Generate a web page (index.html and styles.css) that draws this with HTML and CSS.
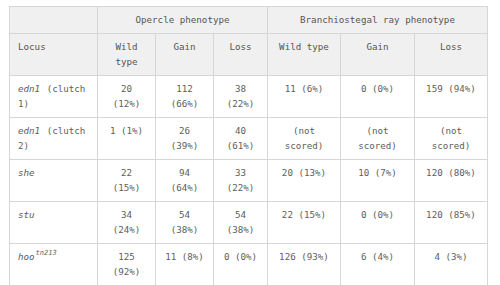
FILE: index.html
```html
<!DOCTYPE html>
<html>
<head>
<meta charset="utf-8">
<link rel="stylesheet" href="styles.css">
</head>
<body>
<table class="pheno">
  <colgroup>
    <col class="c-locus">
    <col class="c-o1"><col class="c-o2"><col class="c-o3">
    <col class="c-b1"><col class="c-b2"><col class="c-b3">
  </colgroup>
  <thead>
    <tr class="h1">
      <th></th>
      <th colspan="3">Opercle phenotype</th>
      <th colspan="3">Branchiostegal ray phenotype</th>
    </tr>
    <tr class="h2">
      <th class="left">Locus</th>
      <th>Wild type</th>
      <th>Gain</th>
      <th>Loss</th>
      <th>Wild type</th>
      <th>Gain</th>
      <th>Loss</th>
    </tr>
  </thead>
  <tbody>
    <tr>
      <td class="left"><i>edn1</i> (clutch 1)</td>
      <td>20 (12%)</td><td>112 (66%)</td><td>38 (22%)</td>
      <td>11 (6%)</td><td>0 (0%)</td><td>159 (94%)</td>
    </tr>
    <tr>
      <td class="left"><i>edn1</i> (clutch 2)</td>
      <td>1 (1%)</td><td>26 (39%)</td><td>40 (61%)</td>
      <td>(not scored)</td><td>(not scored)</td><td>(not scored)</td>
    </tr>
    <tr>
      <td class="left"><i>she</i></td>
      <td>22 (15%)</td><td>94 (64%)</td><td>33 (22%)</td>
      <td>20 (13%)</td><td>10 (7%)</td><td>120 (80%)</td>
    </tr>
    <tr>
      <td class="left"><i>stu</i></td>
      <td>34 (24%)</td><td>54 (38%)</td><td>54 (38%)</td>
      <td>22 (15%)</td><td>0 (0%)</td><td>120 (85%)</td>
    </tr>
    <tr class="last">
      <td class="left"><i>hoo</i><sup><i>tn213</i></sup></td>
      <td>125 (92%)</td><td>11 (8%)</td><td>0 (0%)</td>
      <td>126 (93%)</td><td>6 (4%)</td><td>4 (3%)</td>
    </tr>
  </tbody>
</table>
</body>
</html>
```
FILE: styles.css
```css
html, body {
  margin: 0;
  padding: 0;
  background: #ffffff;
}
body {
  padding: 6px 0 0 9px;
  font-family: "DejaVu Sans Mono", "Liberation Mono", monospace;
  font-size: 9.2px;
  color: #5e5e5e;
}
.pheno {
  border-collapse: collapse;
  table-layout: fixed;
  width: 478px;
  border: 1px solid #d6d6d6;
}
.c-locus { width: 88px; }
.c-o1 { width: 58px; }
.c-o2 { width: 58px; }
.c-o3 { width: 54px; }
.c-b1 { width: 73px; }
.c-b2 { width: 74px; }
.c-b3 { width: 73px; }
.pheno th,
.pheno td {
  border: 1px solid #d6d6d6;
  padding: 5px 8px;
  line-height: 15.5px;
  text-align: center;
  vertical-align: top;
}
.pheno th {
  background: #f0f0f0;
  color: #555555;
  font-weight: normal;
}
.pheno .h1 th {
  vertical-align: middle;
  height: 15px;
}
.pheno .h2 th { height: 29px; }
.pheno td { height: 30px; }
.pheno .last td { height: 29px; }
.pheno .left {
  text-align: left;
  padding-left: 8px;
}
.pheno .left i { margin-right: 1px; }
.pheno sup {
  font-size: 7px;
  line-height: 0;
  vertical-align: 5px;
}
```
